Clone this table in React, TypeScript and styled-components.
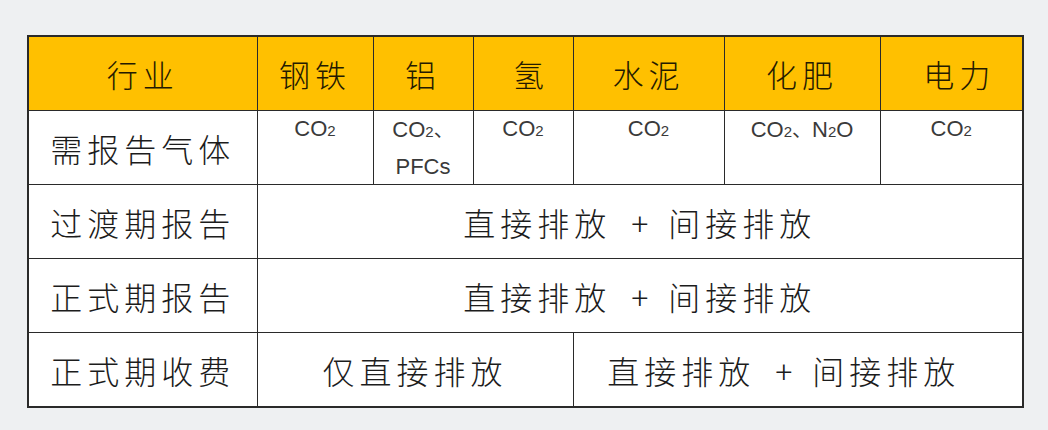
import React from "react";
import styled, { createGlobalStyle } from "styled-components";

const GlobalStyle = createGlobalStyle`
  html, body {
    margin: 0;
    padding: 0;
    background: #eef0f2;
  }
  body {
    font-family: "Noto Sans CJK SC", sans-serif;
  }
`;

const Page = styled.div`
  width: 1048px;
  height: 430px;
  padding: 35px 0 0 27px;
  box-sizing: border-box;
`;

const Table = styled.table`
  border-collapse: collapse;
  table-layout: fixed;
  width: 995px;
  background: #ffffff;
  border: 2px solid #2a2a2a;
`;

const Cell = styled.td<{ $pad?: number; $padR?: number }>`
  border: 1.5px solid #2a2a2a;
  height: 73px;
  padding: 0 ${(p) => p.$padR ?? 0}px 0 ${(p) => p.$pad ?? 0}px;
  text-align: center;
  vertical-align: middle;
  font-family: "Noto Sans CJK SC", sans-serif;
  font-weight: 300;
  font-size: 32px;
  letter-spacing: 5px;
  color: #1c1c1c;
  white-space: nowrap;
`;

const HeadCell = styled(Cell)`
  background: #ffc000;
  color: #241a00;
  font-size: 31px;
`;

const GasCell = styled.td`
  border: 1.5px solid #2a2a2a;
  height: 73px;
  padding: 0;
  text-align: center;
  vertical-align: top;
  font-family: "Liberation Sans", Arial, sans-serif;
  font-size: 22px;
  line-height: 35px;
  color: #3a3a3a;
`;

const Sub = styled.span`
  font-size: 15px;
`;

const Sep = styled.span`
  font-family: "Noto Sans CJK SC", sans-serif;
  font-size: 20px;
`;

const Plus = styled.span`
  display: inline-block;
  margin: 0 20px 0 20px;
  letter-spacing: 0;
`;

const widths = [229, 116, 100, 100, 151, 156, 143];

const headers: { text: string; pad?: number }[] = [
  { text: "钢铁" },
  { text: "铝" },
  { text: "氢", pad: 16 },
  { text: "水泥" },
  { text: "化肥" },
  { text: "电力", pad: 16 },
];

const CO2 = () => (
  <>
    CO<Sub>2</Sub>
  </>
);

const Both = () => (
  <>
    直接排放<Plus>+</Plus>间接排放
  </>
);

export default function App() {
  return (
    <Page>
      <GlobalStyle />
      <Table>
        <colgroup>
          {widths.map((w, i) => (
            <col key={i} style={{ width: w }} />
          ))}
        </colgroup>
        <tbody>
          <tr>
            <HeadCell>行业</HeadCell>
            {headers.map((h) => (
              <HeadCell key={h.text} $pad={h.pad}>
                {h.text}
              </HeadCell>
            ))}
          </tr>
          <tr>
            <Cell>需报告气体</Cell>
            <GasCell>
              <CO2 />
            </GasCell>
            <GasCell>
              <CO2 />
              <Sep>、</Sep>
              <br />
              PFCs
            </GasCell>
            <GasCell>
              <CO2 />
            </GasCell>
            <GasCell>
              <CO2 />
            </GasCell>
            <GasCell>
              <CO2 />
              <Sep>、</Sep>N<Sub>2</Sub>O
            </GasCell>
            <GasCell>
              <CO2 />
            </GasCell>
          </tr>
          <tr>
            <Cell>过渡期报告</Cell>
            <Cell colSpan={6}>
              <Both />
            </Cell>
          </tr>
          <tr>
            <Cell>正式期报告</Cell>
            <Cell colSpan={6}>
              <Both />
            </Cell>
          </tr>
          <tr>
            <Cell>正式期收费</Cell>
            <Cell colSpan={3}>仅直接排放</Cell>
            <Cell colSpan={3} $padR={28}>
              <Both />
            </Cell>
          </tr>
        </tbody>
      </Table>
    </Page>
  );
}
